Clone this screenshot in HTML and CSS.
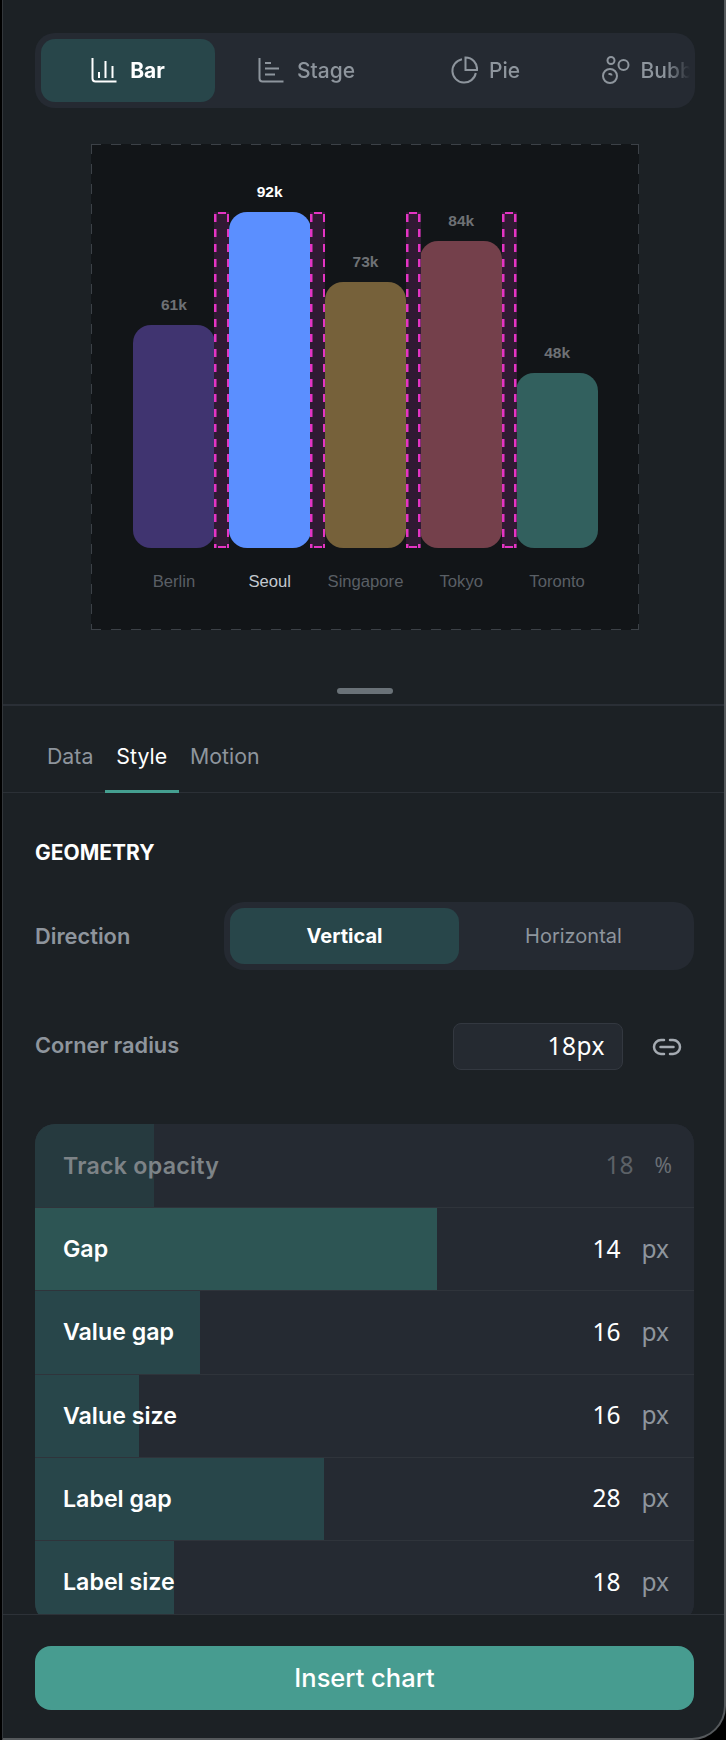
FILE: index.html
```html
<!DOCTYPE html>
<html>
  <head>
    <meta charset="utf-8">
    <title>Chart editor</title>
    <link rel="stylesheet" href="styles.css">
  </head>
  <body>
    <div class="panel">
      <section class="preview">
        <nav class="type-picker">
          <div class="type-scroll">
            <a class="type-item is-active">
              <svg class="type-icon" viewBox="0 0 26 26"><path d="M1.500 1v20.500a3 3 0 0 0 3 3H25.500"/><path d="M8 15v6M14.500 4v17M21.500 9v12"/></svg>
              Bar
            </a>
            <a class="type-item">
              <svg class="type-icon" viewBox="0 0 26 26"><path d="M1.500 1v20.500a3 3 0 0 0 3 3H25.500"/><path d="M7 6h6M7 11.500h14M7 17.500h10"/></svg>
              Stage
            </a>
            <a class="type-item">
              <svg class="type-icon type-icon-lg" viewBox="0 0 28 28"><path d="M12 3.200a11.800 11.800 0 1 0 13.800 13.800"/><path d="M15.500 1.500a11.500 11.500 0 0 1 11.500 12.500h-11.500z"/></svg>
              Pie
            </a>
            <a class="type-item type-item-bubble">
              <svg class="type-icon type-icon-lg" viewBox="0 0 30 28"><circle cx="10" cy="4.500" r="3.500"/><circle cx="22.500" cy="9" r="5"/><circle cx="9" cy="20" r="7"/><path d="M7.500 18h1.500a1.500 1.500 0 0 1 1.500 1.500"/></svg>
              Bubble
            </a>
          </div>
        </nav>

        <div class="canvas">
          <div class="chart">
            <div class="bar-col">
              <span class="bar-value">61k</span>
              <div class="bar bar-berlin" style="height: 223px"></div>
            </div>
            <div class="gap-band"></div>
            <div class="bar-col is-hot">
              <span class="bar-value">92k</span>
              <div class="bar bar-seoul" style="height: 336px"></div>
            </div>
            <div class="gap-band"></div>
            <div class="bar-col">
              <span class="bar-value">73k</span>
              <div class="bar bar-singapore" style="height: 266px"></div>
            </div>
            <div class="gap-band"></div>
            <div class="bar-col">
              <span class="bar-value">84k</span>
              <div class="bar bar-tokyo" style="height: 307px"></div>
            </div>
            <div class="gap-band"></div>
            <div class="bar-col">
              <span class="bar-value">48k</span>
              <div class="bar bar-toronto" style="height: 175px"></div>
            </div>
          </div>
          <div class="bar-labels">
            <span>Berlin</span>
            <span class="is-hot">Seoul</span>
            <span>Singapore</span>
            <span>Tokyo</span>
            <span>Toronto</span>
          </div>
        </div>

        <div class="handle"></div>
      </section>

      <div class="tabs">
        <a class="tab">Data</a>
        <a class="tab is-active">Style</a>
        <a class="tab">Motion</a>
      </div>

      <main class="settings">
        <h2 class="settings-title">GEOMETRY</h2>

        <div class="field field-direction">
          <label class="field-label">Direction</label>
          <div class="switch">
            <a class="switch-item is-active">Vertical</a>
            <a class="switch-item">Horizontal</a>
          </div>
        </div>

        <div class="field field-radius">
          <label class="field-label">Corner radius</label>
          <div class="radius-input">18px</div>
          <svg class="link-icon" viewBox="0 0 30 18"><path d="M12 2H9a7 7 0 0 0 0 14h3M18 2h3a7 7 0 0 1 0 14h-3M8.500 9h13"/></svg>
        </div>

        <div class="sliders">
          <div class="slider is-muted" style="background-size: 119px 100%">
            <span class="slider-name">Track opacity</span>
            <span class="slider-value">18</span>
            <span class="slider-unit">%</span>
          </div>
          <div class="slider is-dragging" style="background-size: 402px 100%">
            <span class="slider-name">Gap</span>
            <span class="slider-value">14</span>
            <span class="slider-unit">px</span>
          </div>
          <div class="slider" style="background-size: 165px 100%">
            <span class="slider-name">Value gap</span>
            <span class="slider-value">16</span>
            <span class="slider-unit">px</span>
          </div>
          <div class="slider" style="background-size: 104px 100%">
            <span class="slider-name">Value size</span>
            <span class="slider-value">16</span>
            <span class="slider-unit">px</span>
          </div>
          <div class="slider" style="background-size: 289px 100%">
            <span class="slider-name">Label gap</span>
            <span class="slider-value">28</span>
            <span class="slider-unit">px</span>
          </div>
          <div class="slider" style="background-size: 139px 100%">
            <span class="slider-name">Label size</span>
            <span class="slider-value">18</span>
            <span class="slider-unit">px</span>
          </div>
        </div>
      </main>

      <footer class="footer">
        <button class="insert-btn">Insert chart</button>
      </footer>
    </div>
  </body>
</html>
```

FILE: styles.css
```css
* { box-sizing: border-box; }

html, body {
  margin: 0;
  height: 1740px;
  overflow: hidden;
  background: #000;
}

body {
  font-family: "Inter", "Noto Sans", sans-serif;
  color: #fff;
}

.panel {
  margin-left: 2px;
  width: 724px;
  height: 1740px;
  display: flex;
  flex-direction: column;
  background: #1c2125;
  border-left: 1px solid #33373b;
  border-right: 2px solid #55595c;
  border-bottom: 2px solid #55595c;
  border-bottom-right-radius: 34px;
  overflow: hidden;
}

/* preview */
.preview {
  padding: 33px 29px 0 32px;
  height: 704px;
  flex: none;
}

.type-picker {
  height: 75px;
  padding: 6px 5px 6px 6px;
  background: #252a32;
  border-radius: 20px;
}

.type-scroll {
  display: flex;
  gap: 4.500px;
  overflow: hidden;
  -webkit-mask-image: linear-gradient(90deg, #000 calc(100% - 24px), transparent);
  mask-image: linear-gradient(90deg, #000 calc(100% - 24px), transparent);
}

.type-item {
  flex: 0 0 174px;
  height: 63px;
  padding-bottom: 1px;
  display: flex;
  align-items: center;
  justify-content: center;
  gap: 13px;
  border-radius: 14px;
  font-size: 21px;
  font-weight: 500;
  color: #8e959d;
}

.type-item.is-active {
  background: #28464a;
  color: #fff;
  font-weight: 700;
}

.type-item-bubble {
  padding-right: 15px;
  gap: 11px;
}

.type-icon {
  height: 26px;
  flex: none;
  fill: none;
  stroke: currentColor;
  stroke-width: 2;
}

.type-icon-lg {
  height: 28px;
  margin-right: -2px;
}

.canvas {
  width: 548px;
  height: 486px;
  margin: 36px 0 0 56px;
  padding: 39px 41px 0 42px;
  background:
    repeating-linear-gradient(90deg, #3c4147 0 10px, transparent 10px 20px) left top / 100% 1px no-repeat,
    repeating-linear-gradient(90deg, #3c4147 0 10px, transparent 10px 20px) left bottom / 100% 1px no-repeat,
    repeating-linear-gradient(180deg, #3c4147 0 10px, transparent 10px 20px) left top / 1px 100% no-repeat,
    repeating-linear-gradient(180deg, #3c4147 0 10px, transparent 10px 20px) right top / 1px 100% no-repeat,
    #121518;
}

.chart {
  height: 365px;
  display: flex;
  align-items: flex-end;
}

.bar-col {
  flex: 1;
  display: flex;
  flex-direction: column;
  align-items: center;
  font-family: "Liberation Sans", Arial, sans-serif;
}

.bar-value {
  font-size: 15.500px;
  font-weight: 700;
  line-height: 18px;
  margin-bottom: 11px;
  color: #6e7175;
}

.bar-col.is-hot .bar-value { color: #fff; }

.bar {
  width: 100%;
  border-radius: 18px;
}

.bar-berlin { background: #403470; }
.bar-seoul { background: #5b8fff; }
.bar-singapore { background: #76613a; }
.bar-tokyo { background: #74404b; }
.bar-toronto { background: #32605e; }

.gap-band {
  flex: 0 0 15px;
  height: 336px;
  margin: 0 -0.500px;
  position: relative;
  z-index: 1;
  background:
    linear-gradient(#e534c4, #e534c4) center top / 8px 2px no-repeat,
    linear-gradient(#e534c4, #e534c4) center bottom / 8px 2px no-repeat,
    repeating-linear-gradient(180deg, #e534c4 0 8px, transparent 8px 15px) left 2px / 2.500px 100% no-repeat,
    repeating-linear-gradient(180deg, #e534c4 0 8px, transparent 8px 15px) right 2px / 2.500px 100% no-repeat,
    #301a33;
}

.bar-labels {
  display: flex;
  gap: 14px;
  margin-top: 25px;
  font-family: "Liberation Sans", Arial, sans-serif;
  font-size: 16.650px;
  line-height: 18px;
  color: #5a5f65;
}

.bar-labels span {
  flex: 1 1 0;
  text-align: center;
  white-space: nowrap;
}

.bar-labels .is-hot { color: #c4c9cf; }

.handle {
  width: 56px;
  height: 6px;
  margin: 58px 0 0 302px;
  border-radius: 3px;
  background: #6a7278;
}

/* tabs */
.tabs {
  flex: none;
  height: 89px;
  padding-left: 32.500px;
  display: flex;
  border-top: 2px solid #2a2f36;
  border-bottom: 1px solid #2b3036;
}

.tab {
  padding: 12px 11.500px 0;
  height: 87px;
  display: flex;
  align-items: center;
  font-size: 21.300px;
  color: #8e959d;
}

.tab.is-active {
  color: #fff;
  box-shadow: inset 0 -3px 0 #45a091;
}

/* settings */
.settings {
  flex: 1;
  min-height: 0;
  overflow: hidden;
  padding: 48px 30px 0 32px;
}

.settings-title {
  margin: 0;
  font-size: 21px;
  font-weight: 700;
  line-height: 24px;
}

.field {
  display: flex;
  align-items: center;
}

.field-direction {
  justify-content: space-between;
  margin-top: 37px;
}

.field-radius {
  margin-top: 53px;
}

.field-radius .field-label { padding-bottom: 4px; }

.field-label {
  font-size: 21.800px;
  font-weight: 600;
  color: #8e959d;
}

.switch {
  width: 470px;
  height: 68px;
  padding: 6px;
  display: grid;
  grid-template-columns: 1fr 1fr;
  border-radius: 20px;
  background: #252a32;
}

.switch-item {
  display: flex;
  align-items: center;
  justify-content: center;
  border-radius: 14px;
  font-size: 20px;
  color: #8e959d;
}

.switch-item.is-active {
  background: #28464a;
  color: #fff;
  font-weight: 700;
}

.radius-input {
  width: 170px;
  height: 47px;
  margin-left: auto;
  padding: 0 17px 2px 0;
  display: flex;
  align-items: center;
  justify-content: flex-end;
  border: 1px solid #333840;
  border-radius: 8px;
  background: #252a31;
  font-family: "Noto Sans", sans-serif;
  font-size: 24.500px;
  letter-spacing: 0.500px;
}

.link-icon {
  width: 30px;
  height: 18px;
  margin: 0 12px 0 29px;
  fill: none;
  stroke: #a5abb2;
  stroke-width: 2.500;
  stroke-linecap: round;
}

.sliders {
  margin-top: 54px;
  border-radius: 20px;
  overflow: hidden;
  background: #252a32;
}

.slider {
  height: 83.200px;
  padding: 0 25px 0 28px;
  display: flex;
  align-items: center;
  gap: 21px;
  border-top: 1px solid #2f343b;
  background-color: #252a32;
  background-image: linear-gradient(#28464a, #28464a);
  background-repeat: no-repeat;
  font-family: "Noto Sans", sans-serif;
  font-size: 24.500px;
}

.slider:first-child { border-top: 0; }

.slider-name {
  margin-right: auto;
  font-family: "Inter", sans-serif;
  font-size: 23.200px;
  font-weight: 600;
}

.slider-value,
.slider-unit { padding-bottom: 2px; }

.slider-unit { color: #8e959d; }

.slider.is-dragging { background-image: linear-gradient(#2d5554, #2d5554); }

.slider.is-muted {
  padding-right: 22px;
  background-image: linear-gradient(#263a3f, #263a3f);
}

.slider.is-muted .slider-name {
  color: #7d8387;
  letter-spacing: 0.250px;
}
.slider.is-muted .slider-value { color: #5c6167; }
.slider.is-muted .slider-unit {
  color: #6b7076;
  font-size: 21px;
}

/* footer */
.footer {
  flex: none;
  height: 124px;
  padding: 31px 30px 0 32px;
  border-top: 1px solid #2d3238;
}

.insert-btn {
  display: block;
  width: 100%;
  height: 64px;
  padding: 0 0 2px;
  border: 0;
  border-radius: 16px;
  background: #479c90;
  color: #fff;
  font-family: inherit;
  font-size: 25.500px;
  font-weight: 500;
}
```
